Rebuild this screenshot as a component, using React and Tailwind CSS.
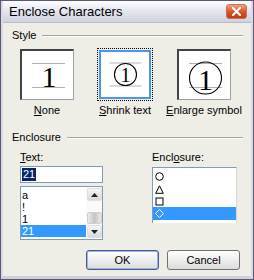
import React from "react";

const F = { fontFamily: '"Liberation Sans", Arial, sans-serif' };

function Box({ kind, selected }) {
  const inner = (
    <svg width="50" height="47" viewBox="0 0 50 47">
      <line x1="9" y1="11.5" x2="42" y2="11.5" stroke="#b0b0b0" strokeWidth="1" />
      <line x1="9" y1="35.5" x2="42" y2="35.5" stroke="#b0b0b0" strokeWidth="1" />
      {kind === "none" && (
        <text x="26" y="35" textAnchor="middle" fontFamily='"Liberation Serif", serif' fontSize="30" fill="#000">1</text>
      )}
      {kind === "shrink" && (
        <>
          <circle cx="25.5" cy="23.5" r="11.5" fill="none" stroke="#000" strokeWidth="1.1" />
          <text x="25.5" y="31" textAnchor="middle" fontFamily='"Liberation Serif", serif' fontSize="21" fill="#000">1</text>
        </>
      )}
      {kind === "enlarge" && (
        <>
          <circle cx="25.5" cy="26" r="16" fill="none" stroke="#000" strokeWidth="1.1" />
          <text x="25.5" y="38" textAnchor="middle" fontFamily='"Liberation Serif", serif' fontSize="30" fill="#000">1</text>
        </>
      )}
    </svg>
  );
  if (selected) {
    return (
      <div className="w-[56px] h-[53px] border border-dotted border-black p-[1px]">
        <div className="w-full h-full border-2 border-[#4d95e8] bg-white flex items-center justify-center overflow-hidden">
          {inner}
        </div>
      </div>
    );
  }
  return (
    <div className="w-[54px] h-[51px] border-t-2 border-l-2 border-[#444] border-b border-r border-b-[#a0a0a0] border-r-[#a0a0a0] bg-white flex items-center justify-center overflow-hidden">
      {inner}
    </div>
  );
}

function Sep({ label }) {
  return (
    <div className="flex items-center h-[13px]">
      <span className="text-[11px] leading-[13px] text-black">{label}</span>
      <div className="ml-[6px] flex-1 h-[2px] border-t border-[#a5a5a5] border-b border-b-white" />
    </div>
  );
}

function Arrow({ up }) {
  return (
    <div className="w-[15px] h-[13px] bg-gradient-to-b from-[#f6f6f6] to-[#d8d8d8] border border-[#e0e0e0] rounded-[2px] flex items-center justify-center">
      <svg width="7" height="4" viewBox="0 0 7 4">
        {up ? <path d="M0 4 L3.5 0 L7 4 Z" fill="#222" /> : <path d="M0 0 L3.5 4 L7 0 Z" fill="#222" />}
      </svg>
    </div>
  );
}

export default function App() {
  return (
    <div style={F} className="w-[254px] h-[280px] bg-[#5b5877] p-[1px] flex flex-col overflow-hidden">
      <div className="flex-1 flex flex-col bg-[#eeede6] border-b-[3px] border-[#cfd0da] border-x-2 border-x-[#d9dae3]">
        {/* title bar */}
        <div className="h-[22px] flex items-center justify-between pl-[6px] pr-[4px] bg-gradient-to-b from-[#fefefe] via-[#e3e5ee] to-[#cfd2df] border-b border-[#b8bac8]">
          <span className="text-[13px] text-black leading-none">Enclose Characters</span>
          <div className="w-[21px] h-[15px] rounded-[3px] bg-gradient-to-b from-[#f0a080] via-[#d9552c] to-[#c23a16] border border-[#c8705a] flex items-center justify-center">
            <svg width="9" height="9" viewBox="0 0 9 9">
              <path d="M1 1 L8 8 M8 1 L1 8" stroke="#fff" strokeWidth="2" strokeLinecap="square" />
            </svg>
          </div>
        </div>
        {/* body */}
        <div className="flex-1 flex flex-col pl-[9px] pr-[8px] pt-[6px]">
          <Sep label="Style" />
          <div className="flex mt-[6px] pl-[8px]">
            <div className="flex flex-col items-center w-[54px]">
              <div className="h-[53px] flex items-center"><Box kind="none" /></div>
              <span className="mt-[3px] text-[11px] leading-[13px] whitespace-nowrap"><u>N</u>one</span>
            </div>
            <div className="flex flex-col items-center w-[56px] ml-[23px]">
              <Box kind="shrink" selected />
              <span className="mt-[3px] text-[11px] leading-[13px] whitespace-nowrap"><u>S</u>hrink text</span>
            </div>
            <div className="flex flex-col items-center w-[54px] ml-[24px]">
              <div className="h-[53px] flex items-center"><Box kind="enlarge" /></div>
              <span className="mt-[3px] text-[11px] leading-[13px] whitespace-nowrap"><u>E</u>nlarge symbol</span>
            </div>
          </div>
          <div className="mt-[14px]">
            <Sep label="Enclosure" />
          </div>
          <div className="flex mt-[7px] pl-[8px]">
            <div className="flex flex-col w-[83px]">
              <span className="text-[11px] leading-[13px]"><u>T</u>ext:</span>
              <div className="mt-[2px] h-[17px] border border-[#7f9db9] bg-white flex items-center pl-[1px]">
                <span className="bg-[#0a246a] text-white text-[11px] leading-[13px] px-[1px]">21</span>
              </div>
              <div className="mt-[3px] h-[54px] border border-[#7f9db9] bg-white flex">
                <div className="flex-1 flex flex-col pt-[2px] text-[11px] leading-[12px]">
                  <span className="h-[12px] pl-[1px]">a</span>
                  <span className="h-[12px] pl-[1px]">!</span>
                  <span className="h-[12px] pl-[1px]">1</span>
                  <span className="h-[12px] pl-[1px] bg-[#3399ff] text-white">21</span>
                </div>
                <div className="w-[16px] flex flex-col items-center bg-[#fafafa] py-[1px]">
                  <Arrow up />
                  <div className="flex-1 w-full flex flex-col justify-end items-center pb-[1px]">
                    <div className="w-[15px] h-[12px] rounded-[2px] border border-[#cfcfcf] bg-gradient-to-r from-[#eaeaea] via-[#c4c4c4] to-[#eaeaea]" />
                  </div>
                  <Arrow />
                </div>
              </div>
            </div>
            <div className="flex flex-col w-[85px] ml-[49px]">
              <span className="text-[11px] leading-[13px]">Encl<u>o</u>sure:</span>
              <div className="mt-[3px] h-[56px] border border-[#7f9db9] border-r-[#d8d8d8] border-b-0 bg-white flex flex-col pt-[2px] text-[11px]">
                <div className="h-[13px] flex items-center pl-[2px]">
                  <svg width="9" height="9" viewBox="0 0 9 9"><circle cx="4.5" cy="4.5" r="3.8" fill="none" stroke="#000" /></svg>
                </div>
                <div className="h-[12px] flex items-center pl-[2px]">
                  <svg width="9" height="9" viewBox="0 0 9 9"><path d="M4.5 0.8 L8.3 8.3 L0.7 8.3 Z" fill="none" stroke="#000" /></svg>
                </div>
                <div className="h-[12px] flex items-center pl-[2px]">
                  <svg width="9" height="9" viewBox="0 0 9 9"><rect x="1" y="1" width="7" height="7" fill="none" stroke="#000" /></svg>
                </div>
                <div className="h-[13px] flex items-center pl-[2px] bg-[#3399ff]">
                  <svg width="9" height="9" viewBox="0 0 9 9"><path d="M4.5 0.5 L8.5 4.5 L4.5 8.5 L0.5 4.5 Z" fill="none" stroke="#fff" /></svg>
                </div>
              </div>
            </div>
          </div>
          <div className="flex justify-end mt-[10px] pr-[3px] gap-[8px]">
            <button className="w-[73px] h-[20px] rounded-[3px] border border-[#4a5a8c] bg-gradient-to-b from-[#ffffff] to-[#dcdcdc] shadow-[inset_0_0_0_1px_#98b4e6] text-[11px] leading-none">OK</button>
            <button className="w-[73px] h-[20px] rounded-[3px] border border-[#707070] bg-gradient-to-b from-[#ffffff] to-[#dcdcdc] text-[11px] leading-none">Cancel</button>
          </div>
        </div>
      </div>
    </div>
  );
}
